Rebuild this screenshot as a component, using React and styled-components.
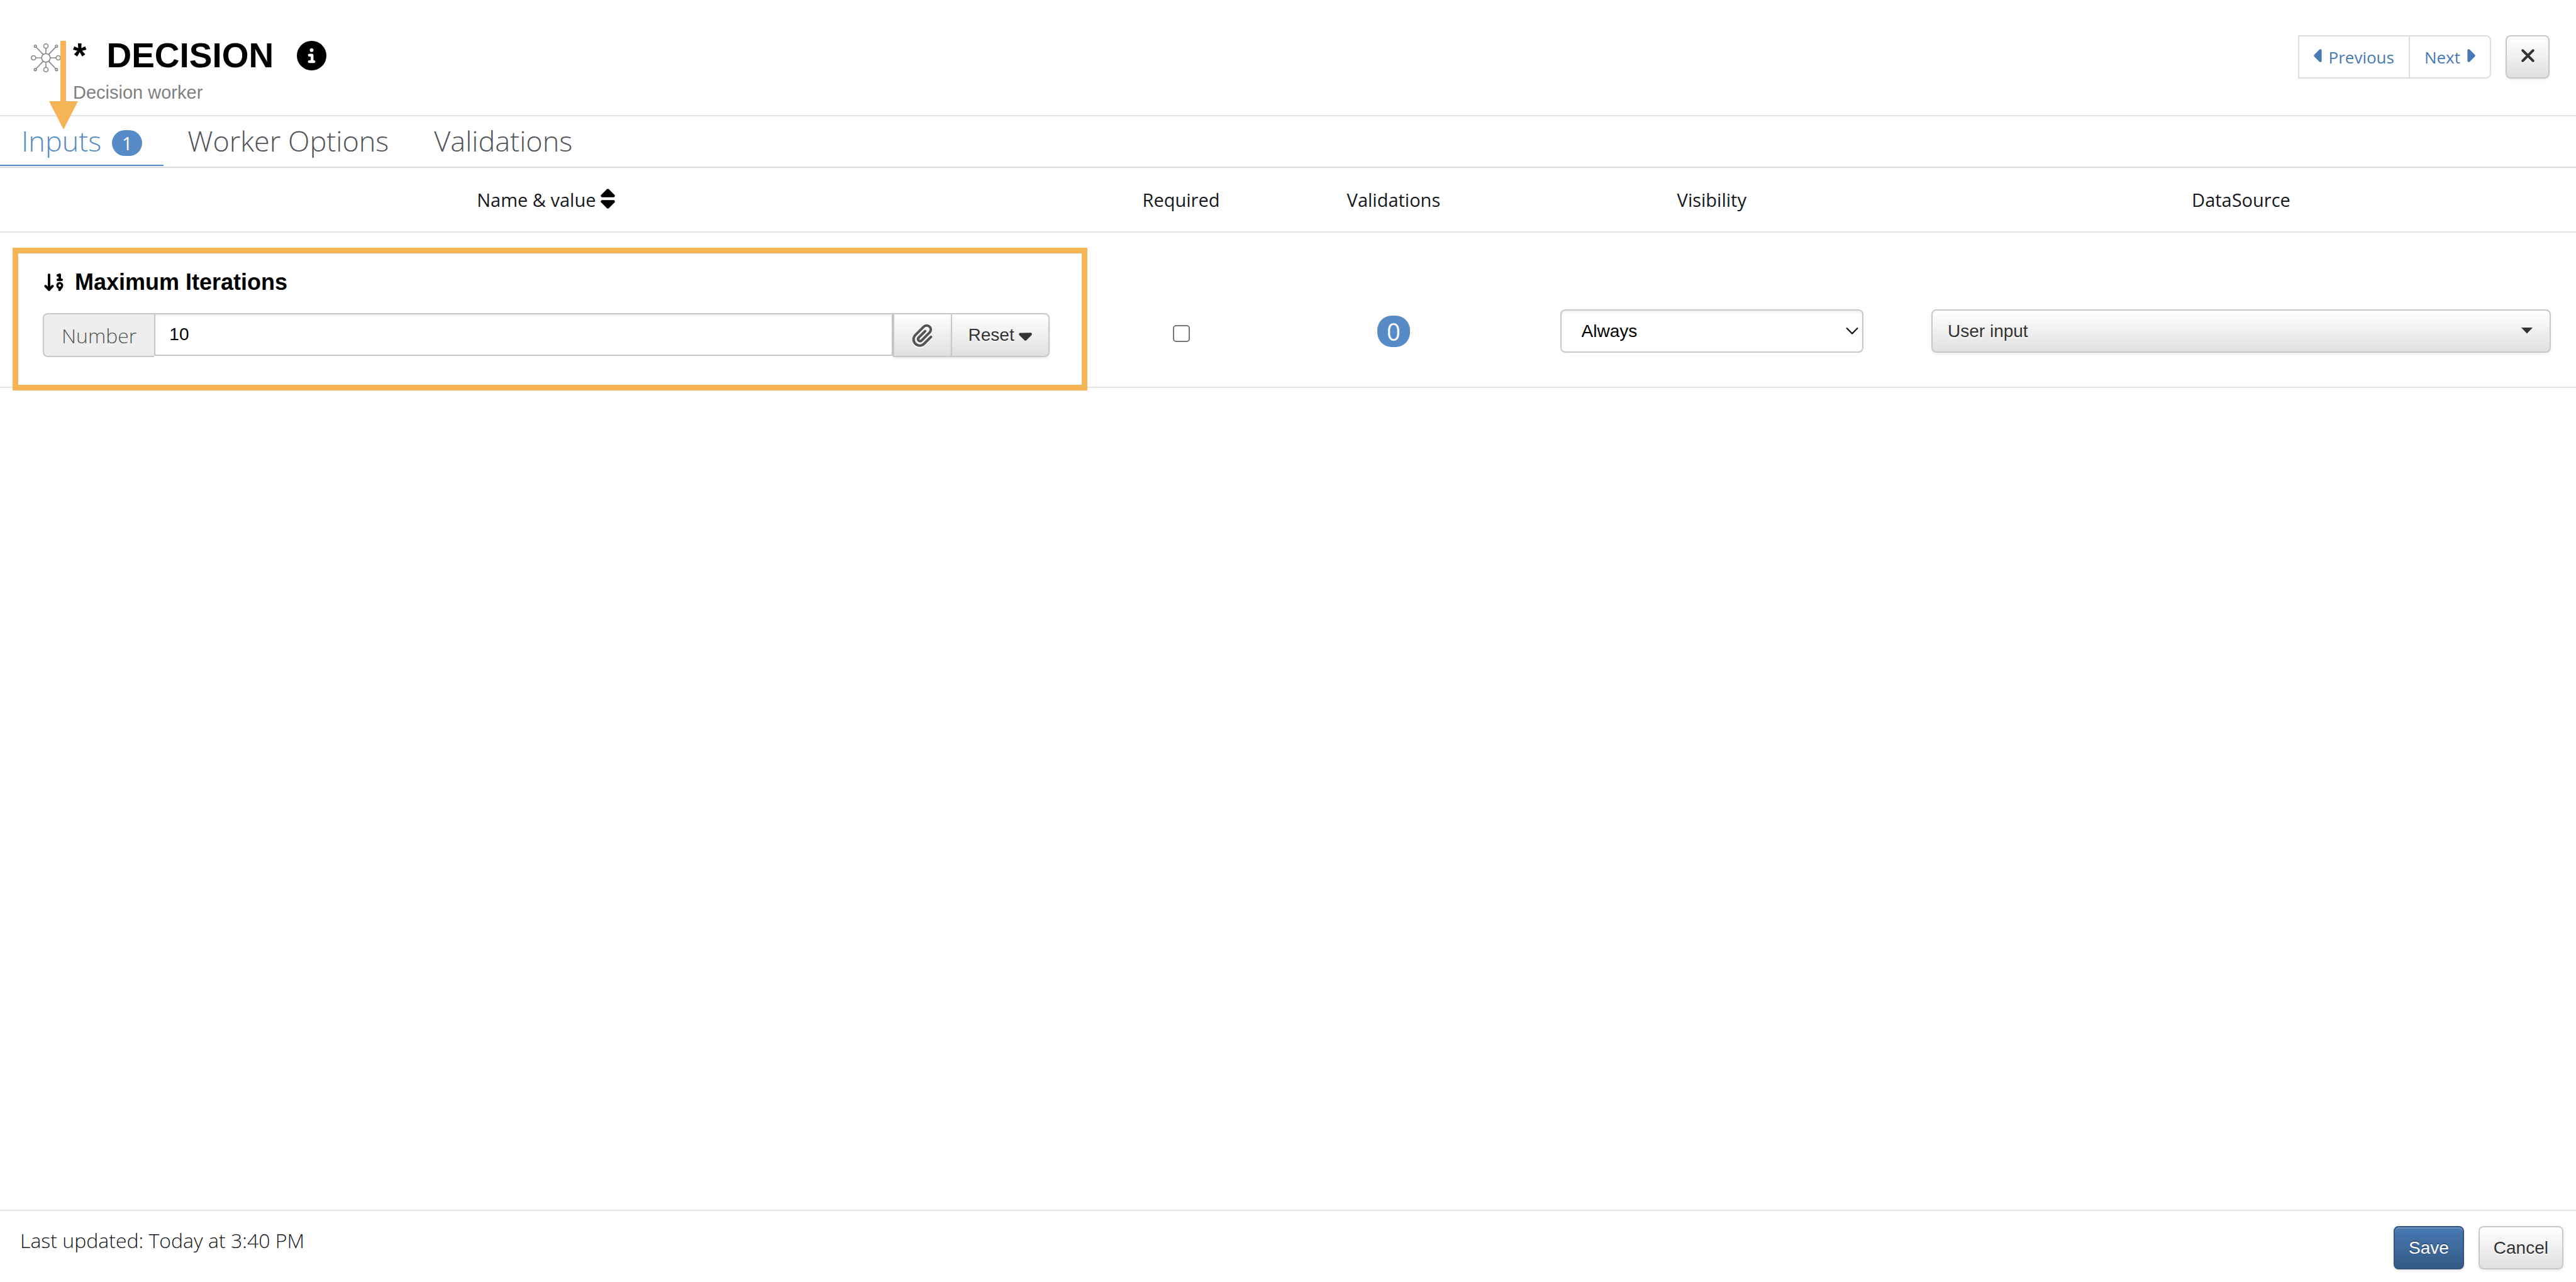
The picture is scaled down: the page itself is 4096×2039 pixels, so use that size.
import React, { useState } from "react"
import styled, { createGlobalStyle, css } from "styled-components"
import {
  FaArrowDown19,
  FaCaretDown,
  FaCaretLeft,
  FaCaretRight,
  FaCircleInfo,
  FaPaperclip,
  FaSort,
  FaXmark,
} from "react-icons/fa6"

const GlobalStyle = createGlobalStyle`
  * {
    box-sizing: border-box;
  }

  body {
    margin: 0;
    background: #fff;
    color: #16181d;
    font-family: "Open Sans", sans-serif;
    font-size: 32px;
    font-weight: 300;
  }
`

const helvetica = css`
  font-family: "Liberation Sans", Arial, sans-serif;
  font-weight: 400;
`

const Page = styled.div`
  position: relative;
  min-height: 100vh;
  display: flex;
  flex-direction: column;
`

const Header = styled.header`
  display: flex;
  justify-content: space-between;
  align-items: flex-start;
  padding: 56px 42px 16px 49px;
  border-bottom: 2px solid #e3e3e3;
`

const Heading = styled.div`
  display: flex;
  gap: 19px;

  > svg {
    width: 48px;
    height: 48px;
    margin-top: 12px;
  }
`

const TitleRow = styled.div`
  display: flex;
  align-items: center;
  gap: 37px;
  height: 64px;

  > svg {
    width: 47px;
    height: 47px;
    color: #000;
  }
`

const Title = styled.h1`
  ${helvetica}
  display: flex;
  gap: 32px;
  margin: 0;
  color: #000;
  font-size: 55px;
  font-weight: 700;
  line-height: 62px;
`

const Subtitle = styled.p`
  ${helvetica}
  margin: 7px 0 0;
  color: #808080;
  font-size: 29px;
  line-height: 40px;
`

const Actions = styled.div`
  display: flex;
  gap: 23px;
`

const Pager = styled.nav`
  display: flex;
  height: 69px;
  border: 2px solid #ddd;
  border-radius: 0 8px 8px 0;

  > a {
    display: flex;
    align-items: center;
    gap: 7px;
    padding: 0 23px;
    color: #4779b3;
    font-size: 26px;
    font-weight: 400;
    text-decoration: none;
  }

  > a + a {
    border-left: 2px solid #ddd;
  }

  svg {
    width: 17px;
    height: 33px;
    margin-bottom: 4px;
  }
`

const raised = css`
  border: 2px solid #c8c8c8;
  background: linear-gradient(#fff, #e0e0e0);
  box-shadow: inset 0 2px 0 rgba(255, 255, 255, 0.2),
    0 2px 4px rgba(0, 0, 0, 0.08);
  color: #333;
  text-shadow: 0 2px 2px rgba(255, 255, 255, 0.75);
`

const Button = styled.button`
  ${helvetica}
  ${raised}
  display: flex;
  align-items: center;
  justify-content: center;
  gap: 7px;
  height: 69px;
  padding: 0 22px;
  border-radius: 8px;
  font-size: 28px;

  svg {
    width: 21px;
    height: 33px;
  }

  ${({ $primary }) =>
    $primary &&
    css`
      border-color: #34557f;
      background: linear-gradient(#4779b3, #345a85);
      box-shadow: inset 0 2px 0 rgba(255, 255, 255, 0.2),
        0 2px 4px rgba(0, 0, 0, 0.1);
      color: #fff;
      text-shadow: 0 -2px 0 rgba(0, 0, 0, 0.25);
    `}
`

const CloseButton = styled(Button)`
  width: 70px;
  padding: 0 0 4px;

  svg {
    width: 25px;
    filter: drop-shadow(0 2px 0 #fff);
  }
`

const Tabs = styled.div`
  display: flex;
  gap: 4px;
  padding-bottom: 1px;
  border-bottom: 2px solid #dadada;
`

const Tab = styled.button`
  display: flex;
  align-items: center;
  gap: 17px;
  height: 79px;
  padding: 0 34px;
  border: 0;
  border-bottom: 2px solid ${({ $active }) => ($active ? "#568bc7" : "transparent")};
  background: none;
  color: ${({ $active }) => ($active ? "#568bc7" : "#50535a")};
  font: 300 45px "Open Sans", sans-serif;
`

const Badge = styled.span`
  display: inline-flex;
  align-items: center;
  justify-content: center;
  width: ${({ $large }) => ($large ? 52 : 48)}px;
  height: ${({ $large }) => ($large ? 50 : 41)}px;
  border-radius: 23px;
  background: #568bc7;
  color: #fff;
  font-size: ${({ $large }) => ($large ? 38 : 29)}px;
  font-weight: 400;
  line-height: 1;

  ${Tab} > & {
    margin-top: 8px;
  }
`

const Table = styled.table`
  width: 100%;
  border-collapse: separate;
  border-spacing: 0;
  table-layout: fixed;

  th {
    height: 103px;
    padding: 0;
    border-bottom: 2px solid #e3e3e3;
    font-size: 29px;
    font-weight: 400;
    text-align: center;
  }

  td {
    position: relative;
    padding: 0;
    border-bottom: 2px solid #e3e3e3;
    vertical-align: top;
  }
`

const SortLabel = styled.div`
  display: flex;
  align-items: center;
  justify-content: center;
  gap: 8px;

  > svg {
    width: 23px;
    height: 36px;
    margin-bottom: 4px;
    color: #000;
  }
`

const NameCell = styled.div`
  padding: 55px 68px 47px;
`

const NameLabel = styled.label`
  ${helvetica}
  display: flex;
  align-items: center;
  gap: 15px;
  height: 48px;
  margin-bottom: 25px;
  color: #000;
  font-size: 36px;
  font-weight: 700;

  > svg {
    width: 36px;
    height: 32px;
  }
`

const InputGroup = styled.div`
  display: flex;
  height: 70px;

  ${Button} {
    height: 70px;
    border-radius: 0;
  }

  ${Button}:last-child {
    margin-left: -2px;
    padding: 0 26px;
    border-radius: 0 8px 8px 0;
  }
`

const AddOn = styled.span`
  display: flex;
  align-items: center;
  justify-content: center;
  padding: 0 28px;
  border: 2px solid #c8c8c8;
  border-right: 0;
  border-radius: 8px 0 0 8px;
  background: #eee;
  color: #555;
`

const TextInput = styled.input`
  ${helvetica}
  flex: 1;
  min-width: 0;
  height: 68px;
  padding: 0 22px;
  border: 2px solid #c8c8c8;
  border-radius: 0;
  background: #fff;
  box-shadow: inset 0 2px 4px rgba(0, 0, 0, 0.075);
  color: #000;
  font-size: 28px;
`

const ClipButton = styled(Button)`
  width: 94px;

  svg {
    width: 33px;
    height: 37px;
    color: #555;
    filter: drop-shadow(0 2px 0 #fff);
  }
`

const ControlCell = styled.div`
  display: flex;
  align-items: center;
  justify-content: center;
  height: 69px;
  margin: 122px ${({ $gutter = 0 }) => $gutter}px 0;
`

const CheckLabel = styled.label`
  display: flex;
  padding-top: 8px;
`

const Checkbox = styled.input`
  appearance: none;
  width: 27px;
  height: 27px;
  margin: 0;
  border: 2px solid #767676;
  border-radius: 5px;
  background: #fff;
`

const SelectBox = styled.div`
  position: relative;
  width: 100%;

  > svg {
    position: absolute;
    top: 28px;
    right: ${({ $raised }) => ($raised ? 28 : 8)}px;
    width: 20px;
    height: 12px;
    pointer-events: none;
  }
`

const Select = styled.select`
  ${helvetica}
  appearance: none;
  display: block;
  width: 100%;
  height: 69px;
  padding: 0 32px;
  border: 2px solid #c8c8c8;
  border-radius: 8px;
  background: #fff;
  box-shadow: inset 0 2px 4px rgba(0, 0, 0, 0.075);
  color: #000;
  font-size: 28px;

  ${({ $raised }) =>
    $raised &&
    css`
      ${raised}
      padding: 0 24px;
    `}
`

const Highlight = styled.div`
  position: absolute;
  z-index: 1;
  inset: 24px 8px -6px 20px;
  border: 9px solid #f5b556;
  pointer-events: none;
`

const Pointer = styled.svg`
  position: absolute;
  top: 65px;
  left: 78px;
  width: 46px;
  height: 141px;
  pointer-events: none;
`

const Footer = styled.footer`
  display: flex;
  justify-content: space-between;
  align-items: flex-start;
  height: 115px;
  margin-top: auto;
  padding: 24px 20px 20px 32px;
  border-top: 2px solid #e3e3e3;
`

const Updated = styled.p`
  margin: 0;
  line-height: 46px;
`

const WorkerIcon = () => (
  <svg viewBox="0 0 52 52" fill="none" stroke="#858585" strokeWidth="1.7">
    <circle cx="26" cy="26" r="7.4" />
    <circle cx="26" cy="5.6" r="3.8" />
    <circle cx="26" cy="46.4" r="3.8" />
    <circle cx="4.7" cy="26" r="3.8" />
    <circle cx="47.3" cy="26" r="3.8" />
    <circle cx="7.8" cy="6" r="1.9" />
    <circle cx="44.2" cy="6" r="1.9" />
    <circle cx="7.8" cy="46.2" r="1.9" />
    <circle cx="44.2" cy="46.2" r="1.9" />
    <path d="M26 9.4v9.2M26 33.4v9.2M8.5 26h10.1M33.4 26h10.1" />
    <path d="M9.1 7.5l12.2 12.7M42.9 7.5L30.7 20.2M9.1 44.7l12.2-12.9M42.9 44.7L30.7 31.8" />
  </svg>
)

const tabs = [
  { name: "Inputs", count: 1 },
  { name: "Worker Options" },
  { name: "Validations" },
]

const App = () => {
  const [tab, setTab] = useState("Inputs")
  const [value, setValue] = useState("10")

  return (
    <Page>
      <GlobalStyle />
      <Header>
        <Heading>
          <WorkerIcon />
          <div>
            <TitleRow>
              <Title>
                <span>*</span>
                <span>DECISION</span>
              </Title>
              <FaCircleInfo />
            </TitleRow>
            <Subtitle>Decision worker</Subtitle>
          </div>
        </Heading>
        <Actions>
          <Pager>
            <a href="#previous">
              <FaCaretLeft />
              Previous
            </a>
            <a href="#next">
              Next
              <FaCaretRight />
            </a>
          </Pager>
          <CloseButton aria-label="Close">
            <FaXmark />
          </CloseButton>
        </Actions>
      </Header>

      <Tabs role="tablist">
        {tabs.map(({ name, count }) => (
          <Tab
            key={name}
            role="tab"
            aria-selected={tab === name}
            $active={tab === name}
            onClick={() => setTab(name)}
          >
            {name}
            {count && <Badge>{count}</Badge>}
          </Tab>
        ))}
      </Tabs>

      <Table>
        <colgroup>
          <col width="42.4%" />
          <col width="6.9%" />
          <col width="9.6%" />
          <col width="15.1%" />
          <col width="26%" />
        </colgroup>
        <thead>
          <tr>
            <th>
              <SortLabel>
                Name &amp; value
                <FaSort />
              </SortLabel>
            </th>
            <th>Required</th>
            <th>Validations</th>
            <th>Visibility</th>
            <th>DataSource</th>
          </tr>
        </thead>
        <tbody>
          <tr>
            <td>
              <NameCell>
                <NameLabel htmlFor="max-iterations">
                  <FaArrowDown19 />
                  Maximum Iterations
                </NameLabel>
                <InputGroup>
                  <AddOn>Number</AddOn>
                  <TextInput
                    id="max-iterations"
                    type="text"
                    value={value}
                    onChange={(e) => setValue(e.target.value)}
                  />
                  <ClipButton aria-label="Attach">
                    <FaPaperclip />
                  </ClipButton>
                  <Button onClick={() => setValue("10")}>
                    Reset
                    <FaCaretDown />
                  </Button>
                </InputGroup>
              </NameCell>
              <Highlight />
            </td>
            <td>
              <ControlCell>
                <CheckLabel>
                  <Checkbox type="checkbox" aria-label="Required" />
                </CheckLabel>
              </ControlCell>
            </td>
            <td>
              <ControlCell>
                <Badge $large>0</Badge>
              </ControlCell>
            </td>
            <td>
              <ControlCell $gutter={68}>
                <SelectBox>
                  <Select aria-label="Visibility">
                    <option>Always</option>
                  </Select>
                  <svg viewBox="0 0 20 12" fill="none" stroke="#000" strokeWidth="2">
                    <path d="M1 1.5l9 9 9-9" />
                  </svg>
                </SelectBox>
              </ControlCell>
            </td>
            <td>
              <ControlCell $gutter={40}>
                <SelectBox $raised>
                  <Select $raised aria-label="DataSource">
                    <option>User input</option>
                  </Select>
                  <svg viewBox="0 0 20 12" fill="#333">
                    <path d="M1 1h18l-9 9.5z" />
                  </svg>
                </SelectBox>
              </ControlCell>
            </td>
          </tr>
        </tbody>
      </Table>

      <Footer>
        <Updated>Last updated: Today at 3:40 PM</Updated>
        <Actions>
          <Button $primary>Save</Button>
          <Button>Cancel</Button>
        </Actions>
      </Footer>

      <Pointer viewBox="0 0 46 141" fill="#f5b556">
        <path d="M18 0h9v96h19L23 141 0 96h18z" />
      </Pointer>
    </Page>
  )
}

export default App
